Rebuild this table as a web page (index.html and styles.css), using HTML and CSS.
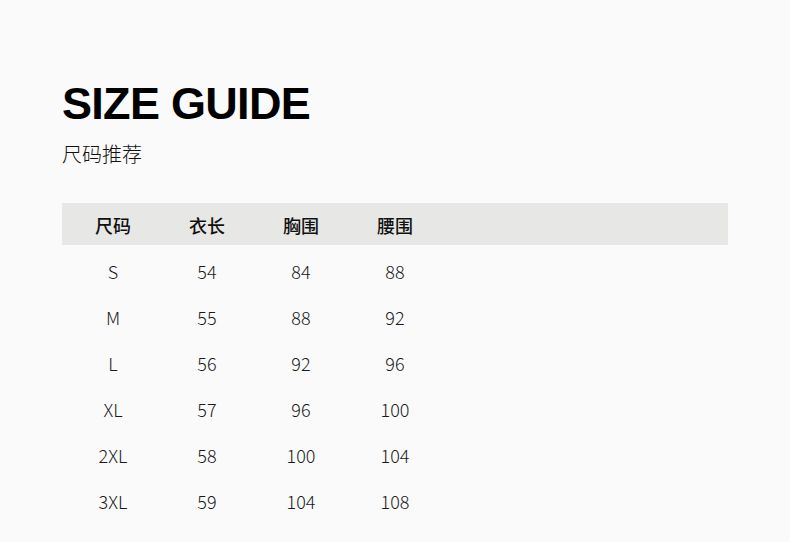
FILE: index.html
```html
<!DOCTYPE html>
<html>
<head>
<meta charset="utf-8">
<link rel="stylesheet" href="styles.css">
</head>
<body>
<div class="page">
  <h1 class="title">SIZE GUIDE</h1>
  <div class="subtitle">尺码推荐</div>
  <div class="table">
    <div class="row head"><span>尺码</span><span>衣长</span><span>胸围</span><span>腰围</span></div>
    <div class="row"><span>S</span><span>54</span><span>84</span><span>88</span></div>
    <div class="row"><span>M</span><span>55</span><span>88</span><span>92</span></div>
    <div class="row"><span>L</span><span>56</span><span>92</span><span>96</span></div>
    <div class="row"><span>XL</span><span>57</span><span>96</span><span>100</span></div>
    <div class="row"><span>2XL</span><span>58</span><span>100</span><span>104</span></div>
    <div class="row"><span>3XL</span><span>59</span><span>104</span><span>108</span></div>
  </div>
</div>
</body>
</html>
```
FILE: styles.css
```css
html, body { margin: 0; padding: 0; }
body { background: #fafafa; width: 790px; height: 542px; overflow: hidden; }
.page { padding: 77px 62px 0 62px; }
.title {
  margin: 0;
  font-family: "Liberation Sans", Arial, sans-serif;
  font-weight: 700;
  font-size: 45px;
  line-height: 54px;
  letter-spacing: -0.7px;
  color: #000;
}
.subtitle {
  margin-top: 9px;
  font-family: "Noto Sans CJK SC", sans-serif;
  font-weight: 300;
  font-size: 20px;
  line-height: 28px;
  color: #111;
}
.table { margin-top: 35px; width: 666px; }
.row {
  display: flex;
  padding-left: 4px;
  height: 46px;
  align-items: center;
  font-family: "Noto Sans CJK SC", sans-serif;
  font-weight: 300;
  font-size: 18px;
  color: #1a1a1a;
}
.row span { width: 94px; text-align: center; }
.row.head {
  background: #e7e7e5;
  height: 42px;
  font-weight: 500;
  color: #111;
  padding-top: 2px;
  box-sizing: border-box;
  margin-bottom: 3px;
}
```
